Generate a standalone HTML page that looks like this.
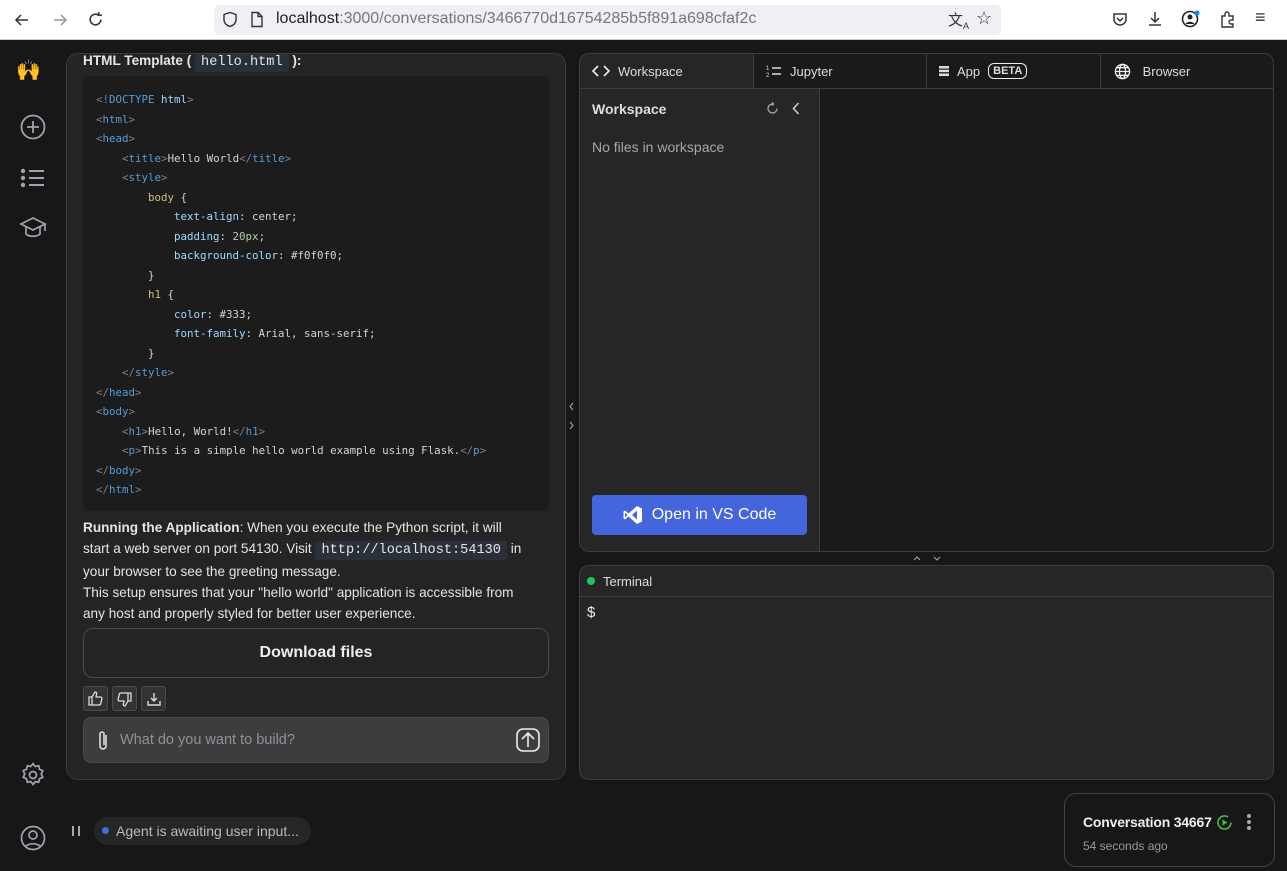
<!DOCTYPE html>
<html><head><meta charset="utf-8"><style>
*{box-sizing:border-box;margin:0;padding:0}
body{width:1287px;height:871px;overflow:hidden;background:#171717;font-family:"Liberation Sans",sans-serif;color:#e5e5e5;position:relative}
.abs{position:absolute}
.top{left:0;top:0;width:1287px;height:40px;background:#fff;border-bottom:1px solid #ccc}
.url{left:214px;top:5px;width:787px;height:30px;background:#f0f0f4;border-radius:5px}
.chat{left:66px;top:53px;width:500px;height:727px;background:#242424;border:1px solid #3b3b3b;border-radius:12px;overflow:hidden}
.code{left:16px;top:22px;width:466px;height:435px;background:#1c1c1c;border-radius:6px;font-family:"DejaVu Sans Mono","Liberation Mono",monospace;font-size:10.8px;padding:14px 13px;line-height:19.5px;color:#d4d4d4;white-space:pre}
.t{color:#808080}.k{color:#569cd6}.a{color:#9cdcfe}.v{color:#b5cea8}.s{color:#d7ba7d}
.p{font-size:13.6px;line-height:21px;color:#e5e5e5}
.ic{font-family:"Liberation Mono",monospace;background:#2a303a;border-radius:4px;padding:2px 6px}
.panel{background:#1a1a1a;border:1.5px solid #3d3d3d;border-radius:10px;overflow:hidden}
.tab{top:0;height:35px;border-right:1px solid #3d3d3d;font-size:13px;color:#ddd;display:flex;align-items:center;padding-left:12px;gap:8px;border-bottom:1px solid #3d3d3d}
svg{display:block}
.btn{top:632px;width:25px;height:25px;border:1px solid #4a4a4a;border-radius:3px;background:#333}
</style></head><body>
<div class="abs top">
 <svg class="abs" style="left:14px;top:12px" width="16" height="16" viewBox="0 0 16 16" fill="none" stroke="#333" stroke-width="1.5"><path d="M14 8H2M7 3L2 8l5 5"/></svg>
 <svg class="abs" style="left:52px;top:12px" width="16" height="16" viewBox="0 0 16 16" fill="none" stroke="#999" stroke-width="1.5"><path d="M2 8h12M9 3l5 5-5 5"/></svg>
 <svg class="abs" style="left:87px;top:11px" width="17" height="17" viewBox="0 0 16 16" fill="none" stroke="#333" stroke-width="1.5"><path d="M13 8a5 5 0 1 1-2-4M11 1v3h3"/></svg>
 <div class="abs url"></div>
 <svg class="abs" style="left:222px;top:11px" width="16" height="17" viewBox="0 0 16 17" fill="none" stroke="#333" stroke-width="1.4"><path d="M8 1.5l6 2v5c0 4-3 6-6 7-3-1-6-3-6-7v-5z"/></svg>
 <svg class="abs" style="left:250px;top:11px" width="14" height="17" viewBox="0 0 14 17" fill="none" stroke="#333" stroke-width="1.4"><path d="M2 1.5h6l4 4v10H2zM8 1.5v4h4"/></svg>
 <div class="abs" style="left:276px;top:10px;font-size:16px;color:#222">localhost<span style="color:#777">:3000/conversations/3466770d16754285b5f891a698cfaf2c</span></div>
 <div class="abs" style="left:948px;top:9px;font-size:15px;color:#333">文<sub style="font-size:9px">A</sub></div>
 <div class="abs" style="left:976px;top:8px;font-size:18px;color:#333">☆</div>
 <svg class="abs" style="left:1112px;top:11px" width="16" height="16" viewBox="0 0 16 16" fill="none" stroke="#333" stroke-width="1.5"><path d="M2 3h12v5a6 6 0 0 1-12 0zM5 7l3 3 3-3"/></svg>
 <svg class="abs" style="left:1147px;top:11px" width="16" height="16" viewBox="0 0 16 16" fill="none" stroke="#333" stroke-width="1.5"><path d="M8 1v10M4 7l4 4 4-4M2 14h12"/></svg>
 <svg class="abs" style="left:1181px;top:10px" width="20" height="18" viewBox="0 0 20 18"><circle cx="9" cy="9" r="7.5" fill="none" stroke="#222" stroke-width="1.6"/><circle cx="9" cy="7" r="2.5" fill="#222"/><path d="M4.5 14a5 4 0 0 1 9 0" fill="#222"/><circle cx="16" cy="3" r="2.5" fill="#0a84ff"/></svg>
 <svg class="abs" style="left:1219px;top:10px" width="18" height="18" viewBox="0 0 18 18" fill="none" stroke="#333" stroke-width="1.4"><path d="M3 6h3V4a2 2 0 0 1 4 0v2h4v4h-2a2 2 0 0 0 0 4h2v3H3z"/></svg>
 <div class="abs" style="left:1255px;top:7px;font-size:18px;color:#333">≡</div>
</div>
<!-- sidebar -->
<div class="abs" style="left:16px;top:58px;font-size:20px">🙌</div>
<svg class="abs" style="left:20px;top:114px" width="26" height="26" viewBox="0 0 26 26" fill="none" stroke="#9ea3ad" stroke-width="1.8"><circle cx="13" cy="13" r="11.5"/><path d="M13 7v12M7 13h12"/></svg>
<svg class="abs" style="left:21px;top:168px" width="24" height="20" viewBox="0 0 24 20" fill="#9ea3ad" stroke="#9ea3ad" stroke-width="2"><circle cx="2" cy="3" r="1.2"/><circle cx="2" cy="10" r="1.2"/><circle cx="2" cy="17" r="1.2"/><path d="M8 3h15M8 10h15M8 17h15"/></svg>
<svg class="abs" style="left:19px;top:216px" width="28" height="24" viewBox="0 0 28 24" fill="none" stroke="#9ea3ad" stroke-width="1.7"><path d="M14 2L2 8l12 6 12-6zM7 11v7c3 3 11 3 14 0v-7M26 8v7"/></svg>
<svg class="abs" style="left:20px;top:762px" width="26" height="26" viewBox="0 0 24 24" fill="none" stroke="#9ea3ad" stroke-width="1.6"><circle cx="12" cy="12" r="3.2"/><path d="M12 1.5l2 2.6 3.2-.6.8 3.2 3 1.4-1.4 3 1.4 3-3 1.4-.8 3.2-3.2-.6-2 2.6-2-2.6-3.2.6-.8-3.2-3-1.4 1.4-3-1.4-3 3-1.4.8-3.2 3.2.6z"/></svg>
<svg class="abs" style="left:20px;top:825px" width="26" height="26" viewBox="0 0 26 26" fill="none" stroke="#9ea3ad" stroke-width="1.7"><circle cx="13" cy="13" r="11.5"/><circle cx="13" cy="10" r="4"/><path d="M5.5 21.5a9 6 0 0 1 15 0"/></svg>
<!-- chat -->
<div class="abs chat">
 <div class="abs p" style="left:16px;top:-4px;font-weight:bold">HTML Template ( <span class="ic" style="font-weight:normal">hello.html</span> ):</div>
 <div class="abs code"><span class="t">&lt;!</span><span class="k">DOCTYPE</span> <span class="a">html</span><span class="t">&gt;</span>
<span class="t">&lt;</span><span class="k">html</span><span class="t">&gt;</span>
<span class="t">&lt;</span><span class="k">head</span><span class="t">&gt;</span>
    <span class="t">&lt;</span><span class="k">title</span><span class="t">&gt;</span>Hello World<span class="t">&lt;/</span><span class="k">title</span><span class="t">&gt;</span>
    <span class="t">&lt;</span><span class="k">style</span><span class="t">&gt;</span>
        <span class="s">body</span> {
            <span class="a">text-align</span>: center;
            <span class="a">padding</span>: <span class="v">20px</span>;
            <span class="a">background-color</span>: #f0f0f0;
        }
        <span class="s">h1</span> {
            <span class="a">color</span>: #333;
            <span class="a">font-family</span>: Arial, sans-serif;
        }
    <span class="t">&lt;/</span><span class="k">style</span><span class="t">&gt;</span>
<span class="t">&lt;/</span><span class="k">head</span><span class="t">&gt;</span>
<span class="t">&lt;</span><span class="k">body</span><span class="t">&gt;</span>
    <span class="t">&lt;</span><span class="k">h1</span><span class="t">&gt;</span>Hello, World!<span class="t">&lt;/</span><span class="k">h1</span><span class="t">&gt;</span>
    <span class="t">&lt;</span><span class="k">p</span><span class="t">&gt;</span>This is a simple hello world example using Flask.<span class="t">&lt;/</span><span class="k">p</span><span class="t">&gt;</span>
<span class="t">&lt;/</span><span class="k">body</span><span class="t">&gt;</span>
<span class="t">&lt;/</span><span class="k">html</span><span class="t">&gt;</span></div>
 <div class="abs p" style="left:16px;top:463px;width:460px">
  <div style="white-space:nowrap"><b>Running the Application</b>: When you execute the Python script, it will</div>
  <div style="white-space:nowrap">start a web server on port 54130. Visit <span class="ic">http://localhost:54130</span> in</div>
  <div style="white-space:nowrap">your browser to see the greeting message.</div>
  <div style="white-space:nowrap">This setup ensures that your "hello world" application is accessible from</div>
  <div style="white-space:nowrap">any host and properly styled for better user experience.</div>
 </div>
 <div class="abs" style="left:16px;top:574px;width:466px;height:50px;border:1px solid #4a4a4a;border-radius:10px;display:flex;align-items:center;justify-content:center;font-weight:bold;font-size:16px;color:#eee">Download files</div>
 <div class="abs btn" style="left:16px"><svg style="margin:4px" width="15" height="15" viewBox="0 0 15 15" fill="none" stroke="#ddd" stroke-width="1.3"><path d="M1 6h3v8H1zM4 6l3-5c1.5 0 2 1 1.5 2.5L8 6h4.5a1.5 1.5 0 0 1 1.4 1.8l-1.2 4.7a1.5 1.5 0 0 1-1.4 1.5H4"/></svg></div>
 <div class="abs btn" style="left:45px"><svg style="margin:5px 4px" width="15" height="15" viewBox="0 0 15 15" fill="none" stroke="#ddd" stroke-width="1.3"><g transform="rotate(180 7.5 7.5)"><path d="M1 6h3v8H1zM4 6l3-5c1.5 0 2 1 1.5 2.5L8 6h4.5a1.5 1.5 0 0 1 1.4 1.8l-1.2 4.7a1.5 1.5 0 0 1-1.4 1.5H4"/></g></svg></div>
 <div class="abs btn" style="left:74px"><svg style="margin:5px" width="14" height="14" viewBox="0 0 14 14" fill="none" stroke="#ddd" stroke-width="1.4"><path d="M7 1v8M4 6l3 3 3-3M1 9v4h12V9"/></svg></div>
 <div class="abs" style="left:16px;top:663px;width:466px;height:46px;background:#3d3d3d;border:1px solid #4a4a4a;border-radius:8px">
  <svg class="abs" style="left:12px;top:12px" width="14" height="22" viewBox="0 0 14 22" fill="none" stroke="#ddd" stroke-width="1.6"><path d="M10 5v11a3 3 0 0 1-6 0V4a2 2 0 0 1 4 0v11"/></svg>
  <div class="abs" style="left:36px;top:14px;font-size:14.5px;color:#8c929c">What do you want to build?</div>
  <svg class="abs" style="left:432px;top:10px" width="24" height="24" viewBox="0 0 24 24" fill="none" stroke="#eee" stroke-width="1.6"><rect x="1" y="1" width="22" height="22" rx="6"/><path d="M12 19V5M6 11l6-6 6 6"/></svg>
 </div>
</div>
<svg class="abs" style="left:568px;top:402px" width="7" height="30" viewBox="0 0 7 30" fill="none" stroke="#aaa" stroke-width="1"><path d="M5 1L2 4.5 5 8M2 20l3 3.5L2 27"/></svg>
<svg class="abs" style="left:70px;top:825px" width="12" height="12" viewBox="0 0 12 12" stroke="#ccc" stroke-width="1.6"><path d="M3 1v10M9 1v10"/></svg>
<div class="abs" style="left:94px;top:817px;width:217px;height:28px;background:#262626;border-radius:14px;font-size:14px;color:#bbb;padding:6px 0 0 22px">Agent is awaiting user input...<span class="abs" style="left:8px;top:10px;width:7px;height:7px;border-radius:50%;background:#3b6fd6"></span></div>
<!-- workspace panel -->
<div class="abs panel" style="left:579px;top:53px;width:695px;height:499px">
 <div class="abs tab" style="left:0;width:174px;background:#262626"><svg width="18" height="12" viewBox="0 0 18 12" fill="none" stroke="#eee" stroke-width="1.6"><path d="M6 1L1 6l5 5M12 1l5 5-5 5"/></svg>Workspace</div>
 <div class="abs tab" style="left:174px;width:173px"><svg width="16" height="12" viewBox="0 0 16 12"><text x="0" y="5" font-size="6" fill="#ddd" font-family="Liberation Sans">1</text><text x="0" y="12" font-size="6" fill="#ddd" font-family="Liberation Sans">2</text><path d="M6 3h9M6 9h9" stroke="#ddd" stroke-width="1.5"/></svg>Jupyter</div>
 <div class="abs tab" style="left:347px;width:174px"><svg width="10" height="10" viewBox="0 0 10 10" fill="#ddd"><rect y="0" width="10" height="2.5"/><rect y="3.7" width="10" height="2.5"/><rect y="7.5" width="10" height="2.5"/></svg>App <span style="border:1.5px solid #eee;border-radius:6px;font-size:11px;font-weight:bold;padding:1px 4px">BETA</span></div>
 <div class="abs tab" style="left:521px;width:174px;border-right:none;padding-left:13px"><svg width="17" height="17" viewBox="0 0 18 18" fill="none" stroke="#eee" stroke-width="1.4"><circle cx="9" cy="9" r="7.5"/><ellipse cx="9" cy="9" rx="3.2" ry="7.5"/><path d="M1.5 9h15M3 5h12M3 13h12"/></svg>&nbsp;Browser</div>
 <div class="abs" style="left:0;top:35px;width:240px;height:464px;background:#262626;border-right:1px solid #3d3d3d">
  <div class="abs" style="left:12px;top:12px;font-size:14px;font-weight:bold;color:#ddd">Workspace</div>
  <svg class="abs" style="left:186px;top:13px" width="13" height="13" viewBox="0 0 13 13" fill="none" stroke="#aaa" stroke-width="1.3"><path d="M11 6.5A4.5 4.5 0 1 1 6.5 2M6 0.5l1.5 1.5L6 3.5"/></svg>
  <svg class="abs" style="left:212px;top:13px" width="8" height="13" viewBox="0 0 8 13" fill="none" stroke="#ccc" stroke-width="1.6"><path d="M6.5 1L1.5 6.5 6.5 12"/></svg>
  <div class="abs" style="left:12px;top:50px;font-size:14px;color:#a8a8a8">No files in workspace</div>
  <div class="abs" style="left:12px;top:406px;width:215px;height:40px;background:#4465db;border-radius:4px;color:#fff;font-size:16px;display:flex;align-items:center;justify-content:center;gap:9px"><svg width="20" height="20" viewBox="0 0 20 20" fill="#fff"><path d="M14 1l5 2.5v13L14 19 5.5 11.5 2 14.5 0.5 13.5V6.5L2 5.5l3.5 3zM14 5.5L9 10l5 4.5zM2 7.5v5l2.5-2.5z"/></svg>Open in VS Code</div>
 </div>
</div>
<svg class="abs" style="left:911px;top:554px" width="32" height="8" viewBox="0 0 32 8" fill="none" stroke="#aaa" stroke-width="1"><path d="M3 6l3-3 3 3M23 3l3 3 3-3"/></svg>
<!-- terminal -->
<div class="abs panel" style="left:579px;top:565px;width:695px;height:215px;background:#262626">
 <div class="abs" style="left:0;top:0;width:695px;height:31px;border-bottom:1px solid #3d3d3d;font-size:13px;color:#ddd;padding:8px 0 0 23px">Terminal<span class="abs" style="left:7px;top:11px;width:8px;height:8px;border-radius:50%;background:#22c55e"></span></div>
 <div class="abs" style="left:7px;top:38px;font-size:15px;color:#eee">$</div>
</div>
<!-- conversation card -->
<div class="abs" style="left:1064px;top:793px;width:211px;height:74px;border:1px solid #444;border-radius:12px;background:#171717">
 <div class="abs" style="left:18px;top:20px;font-size:14px;font-weight:bold;color:#eee;letter-spacing:-0.2px">Conversation 34667</div>
 <svg class="abs" style="left:151px;top:20px" width="17" height="17" viewBox="0 0 17 17" fill="none" stroke="#3fbf3f" stroke-width="1.6"><path d="M15 8.5a6.5 6.5 0 1 1-3-5.5"/><path d="M6.5 5.5v6l5-3z" fill="#3fbf3f" stroke="none"/></svg>
 <div class="abs" style="left:182px;top:20px;width:4px;line-height:5px;font-size:0">
  <div style="width:4px;height:4px;border-radius:50%;background:#aaa;margin-bottom:2px"></div><div style="width:4px;height:4px;border-radius:50%;background:#aaa;margin-bottom:2px"></div><div style="width:4px;height:4px;border-radius:50%;background:#aaa"></div></div>
 <div class="abs" style="left:18px;top:45px;font-size:12px;color:#999">54 seconds ago</div>
</div>
</body></html>
